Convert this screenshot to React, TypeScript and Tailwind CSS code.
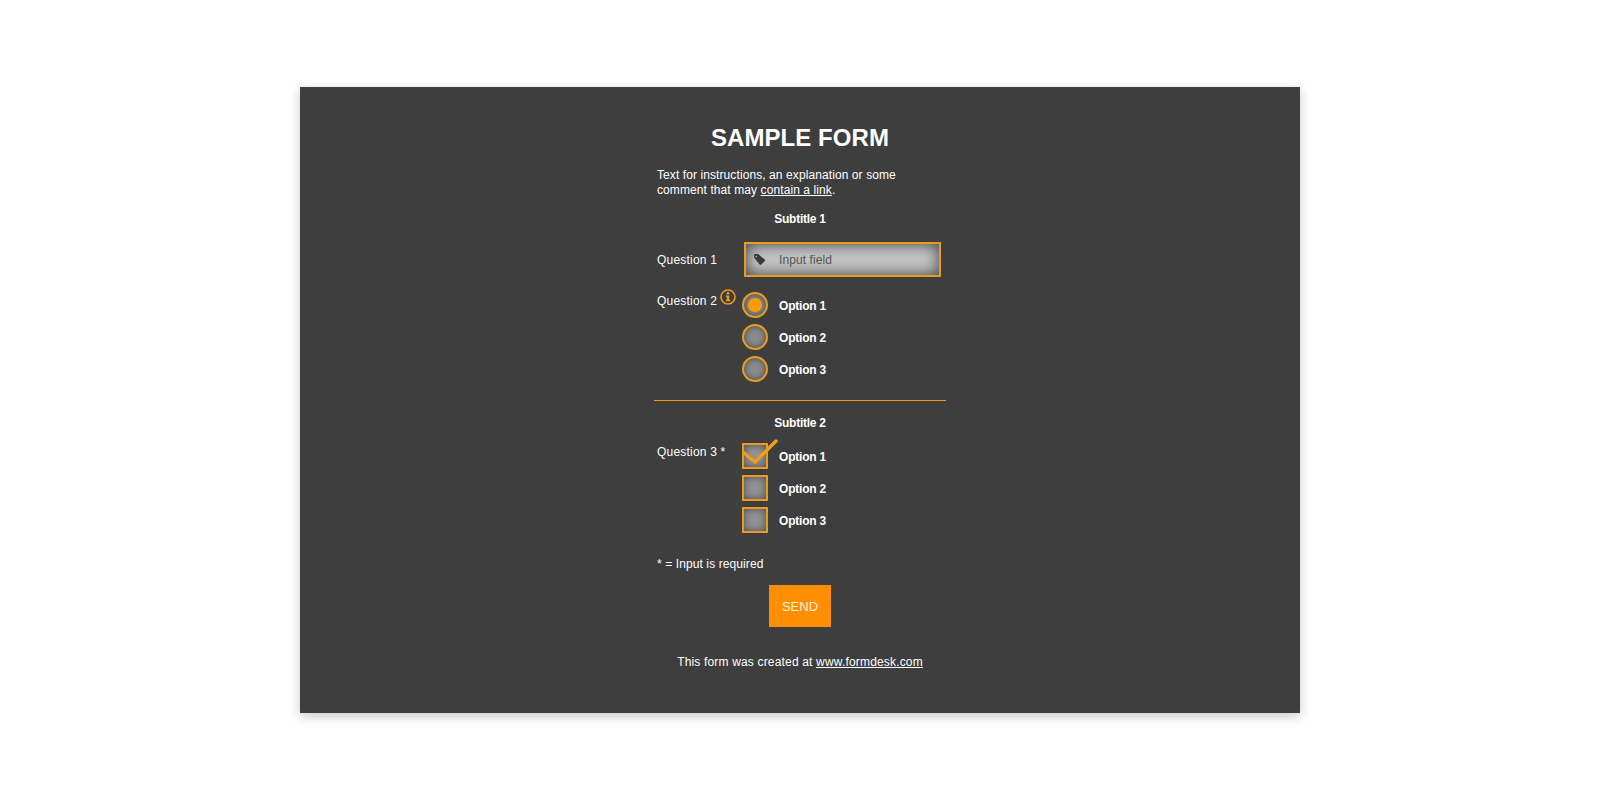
import React from 'react';

const options = ['Option 1', 'Option 2', 'Option 3'];

function TagIcon() {
  return (
    <svg width="13" height="13" viewBox="0 0 13 13" className="shrink-0">
      <path d="M1 2.4 Q1 1 2.4 1 L5 1 L11.8 6.6 Q12.4 7.4 11.8 8 L8.2 11.6 Q7.4 12.2 6.6 11.6 L1.4 5 Z M3.3 2.7 a0.7 0.7 0 1 0 0.01 0 Z" fill="#3a3a3a" fillRule="evenodd" />
    </svg>
  );
}

function InfoIcon() {
  return (
    <svg width="16" height="16" viewBox="0 0 16 16" className="shrink-0">
      <circle cx="8" cy="8" r="7" fill="none" stroke="#e89a1c" strokeWidth="1.6" />
      <rect x="6.8" y="3.2" width="2.4" height="2.2" fill="#e89a1c" />
      <path d="M5.8 6.5 H9.2 V10.8 H10.2 V12.3 H5.8 V10.8 H6.8 V8 H5.8 Z" fill="#e89a1c" />
    </svg>
  );
}

function Radio({ label, checked }: { label: string; checked?: boolean }) {
  return (
    <div className="flex items-center h-[26px]">
      <div className="w-[26px] h-[26px] rounded-full border-2 border-[#e89a1c] bg-[#8c8c8c] shadow-[inset_0_0_7px_#454545] flex items-center justify-center">
        {checked && <div className="w-[14px] h-[14px] rounded-full bg-[#ff9a0a]" />}
      </div>
      <span className="ml-[11px] pt-[2px] font-bold tracking-[-0.2px] text-white">{label}</span>
    </div>
  );
}

function Checkbox({ label, checked }: { label: string; checked?: boolean }) {
  return (
    <div className="flex items-center h-[26px]">
      <div className="relative w-[26px] h-[26px] border-2 border-[#e89a1c] bg-[#949494] shadow-[inset_0_0_9px_#4a4a4a]">
        {checked && (
          <svg width="38" height="30" viewBox="0 0 38 30" className="absolute left-[-2px] top-[-6px]">
            <path d="M2 14 L13 23 L34 2" fill="none" stroke="#f09d1a" strokeWidth="3.5" strokeLinecap="round" strokeLinejoin="miter" />
          </svg>
        )}
      </div>
      <span className="ml-[11px] pt-[2px] font-bold tracking-[-0.2px] text-white">{label}</span>
    </div>
  );
}

export default function App() {
  return (
    <div className="min-h-[800px] bg-white pt-[87px] font-['Liberation_Sans',Arial,sans-serif] text-[12px] leading-[15px] text-white">
      <div className="w-[1000px] h-[626px] mx-auto bg-[#3e3e3e] pt-[37px] shadow-[0_3px_10px_rgba(0,0,0,0.22)]">
        <div className="w-[292px] mx-auto">
          <h1 className="text-[24px] leading-[28px] font-bold text-center tracking-[0.05px]">SAMPLE FORM</h1>

          <div className="px-[3px]">
            <p className="mt-[16px] tracking-[0.09px]">
              Text for instructions, an explanation or some comment that may{' '}
              <a className="underline">contain a link</a>.
            </p>
            <h2 className="mt-[14px] font-bold text-center tracking-[-0.25px]">Subtitle 1</h2>

            {/* Question 1 */}
            <div className="mt-[15px] flex items-center">
              <span className="w-[87px] shrink-0 pt-[2px] tracking-[0.2px]">Question 1</span>
              <div className="w-[197px] h-[35px] border-2 border-[#e89a1c] bg-[#c6c6c6] shadow-[inset_0_0_16px_#3a3a3a] flex items-center pl-[7px]">
                <TagIcon />
                <span className="ml-[13px] pt-[2px] tracking-[0.1px] text-[#555555]">Input field</span>
              </div>
            </div>

            {/* Question 2 */}
            <div className="mt-[15px] flex">
              <div className="w-[85px] shrink-0 flex items-start">
                <span className="mt-[2px] tracking-[0.2px]">Question 2</span>
                <span className="ml-[3px] -mt-[3px]"><InfoIcon /></span>
              </div>
              <div className="flex flex-col gap-[6px]">
                <Radio label={options[0]} checked />
                <Radio label={options[1]} />
                <Radio label={options[2]} />
              </div>
            </div>
          </div>

          <div className="mt-[18px] h-px bg-[#e89a1c]" />

          <div className="px-[3px]">
            <h2 className="mt-[15px] font-bold text-center tracking-[-0.25px]">Subtitle 2</h2>

            {/* Question 3 */}
            <div className="mt-[12px] flex">
              <span className="w-[85px] shrink-0 mt-[2px] tracking-[0.2px]">Question 3 *</span>
              <div className="flex flex-col gap-[6px]">
                <Checkbox label={options[0]} checked />
                <Checkbox label={options[1]} />
                <Checkbox label={options[2]} />
              </div>
            </div>

            <p className="mt-[24px] tracking-[0.1px]">* = Input is required</p>
          </div>

          <div className="mt-[13px] flex justify-center">
            <button className="w-[62px] h-[42px] bg-[#ff8f00] text-[13px] text-[#fff3dc]">SEND</button>
          </div>

          <p className="mt-[28px] text-center tracking-[0.17px]">
            This form was created at <a className="underline">www.formdesk.com</a>
          </p>
        </div>
      </div>
    </div>
  );
}
